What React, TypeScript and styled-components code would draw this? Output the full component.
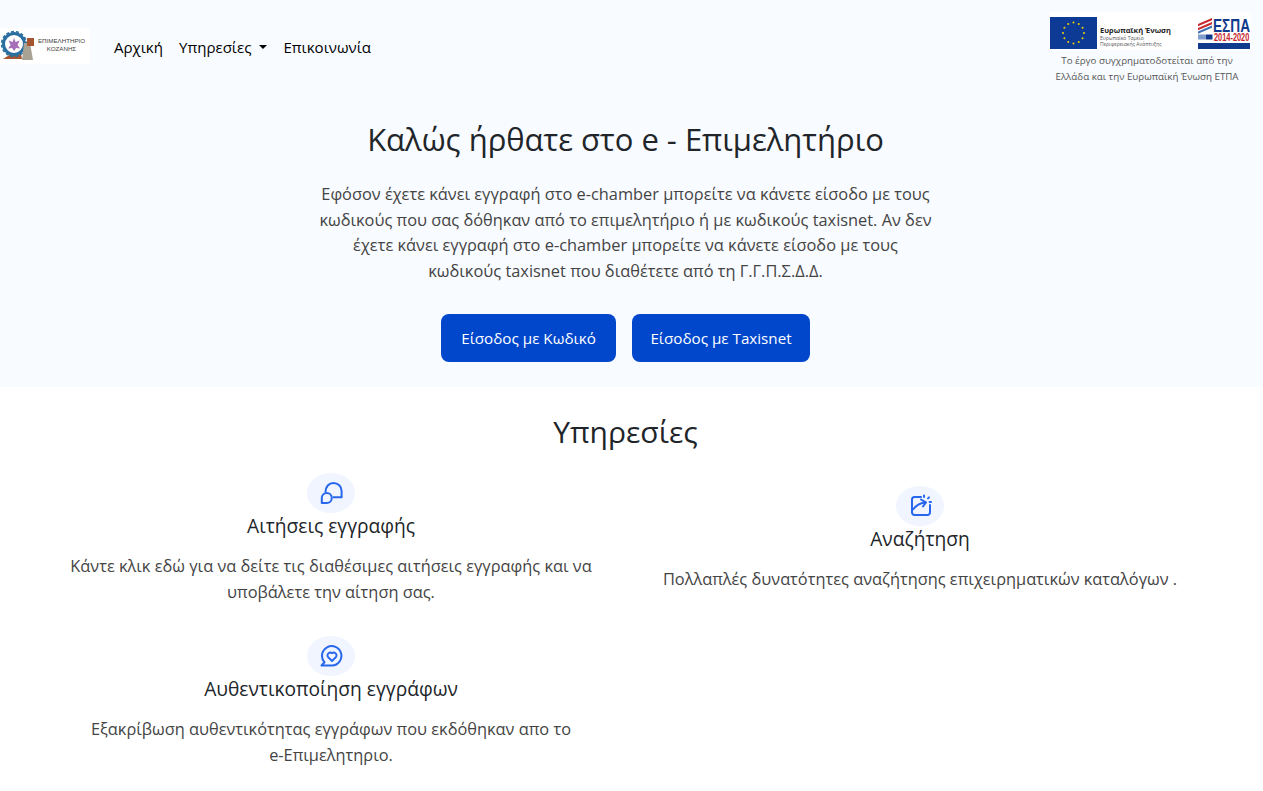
import React from "react";
import styled, { createGlobalStyle } from "styled-components";

const Global = createGlobalStyle`
  html, body { margin: 0; padding: 0; background: #fff; }
  body { font-family: "Open Sans", "Noto Sans", "Liberation Sans", sans-serif; color: #212529; }
`;
const Page = styled.div`
  width: 1263px;
  height: 791px;
  overflow: hidden;
`;
const HeroBand = styled.div`
  width: 1263px;
  height: 387px;
  padding-right: 12px;
  box-sizing: border-box;
  background: #f8fbff;
`;
const Nav = styled.nav`
  height: 93px;
  display: flex;
  align-items: flex-start;
  justify-content: space-between;
`;
const NavLeft = styled.div`
  display: flex;
  align-items: center;
  height: 93px;
`;
const Logo = styled.svg`
  display: block;
  width: 90px;
  height: 36px;
  margin-right: 16px;
  margin-top: -1px;
`;
const NavLink = styled.a`
  font-size: 15.05px;
  color: #000;
  padding: 0 8px;
  display: inline-flex;
  align-items: center;
`;
const Caret = styled.span`
  display: inline-block;
  margin-left: 8px;
  border-top: 4.8px solid #000;
  border-left: 4.8px solid transparent;
  border-right: 4.8px solid transparent;
`;
const Funding = styled.div`
  width: 201px;
  padding-top: 12px;
`;
const FundingLogo = styled.svg`
  display: block;
  width: 201px;
  height: 38px;
`;
const FundingNote = styled.p`
  margin: 3px 7px 0 0;
  font-size: 9.75px;
  line-height: 16px;
  text-align: center;
  white-space: nowrap;
  color: #555;
`;
const Hero = styled.header`
  display: flex;
  flex-direction: column;
  align-items: center;
`;
const Title = styled.h1`
  margin: 27px 0 0;
  font-size: 31px;
  line-height: 38px;
  font-weight: 400;
  color: #212529;
`;
const Lead = styled.p`
  margin: 24px 0 0;
  width: 614px;
  font-size: 16.38px;
  line-height: 25.5px;
  text-align: center;
  color: #444;
`;
const Actions = styled.div`
  margin-top: 30px;
  display: flex;
  gap: 16px;
`;
const Button = styled.a<{ $w: number }>`
  width: ${(p) => p.$w}px;
  height: 48px;
  border-radius: 8px;
  background: #0047cc;
  color: #fff;
  font-size: 15.2px;
  display: flex;
  align-items: center;
  justify-content: center;
`;
const Services = styled.section`
  width: 1178px;
  margin-left: 36.5px;
`;
const SectionTitle = styled.h2`
  margin: 24px 0 20px;
  font-size: 30px;
  line-height: 42px;
  font-weight: 400;
  text-align: center;
  color: #212529;
`;
const Grid = styled.div`
  display: grid;
  grid-template-columns: 1fr 1fr;
  grid-auto-rows: 163px;
  align-items: start;
`;
const Card = styled.article<{ $offset?: number }>`
  display: flex;
  flex-direction: column;
  align-items: center;
  padding: ${(p) => p.$offset ?? 0}px 24px 0;
  text-align: center;
`;
const IconWrap = styled.div`
  width: 48px;
  height: 40px;
  border-radius: 50%;
  background: #f0f5ff;
  display: flex;
  align-items: center;
  justify-content: center;
  color: #2667ee;
`;
const CardTitle = styled.h3`
  margin: 1px 0 0;
  font-size: 19.2px;
  line-height: 24px;
  font-weight: 400;
  color: #212529;
`;
const CardText = styled.p`
  margin: 16px 0 0;
  font-size: 16.38px;
  line-height: 25.5px;
  color: #444;
`;
const NoWrap = styled.span`
  white-space: nowrap;
`;

const BubblesIcon = () => (
  <svg width="24" height="24" viewBox="0 0 24 24" fill="none" stroke="currentColor" strokeWidth="2" strokeLinejoin="round">
    <path d="M6.4 11.500C6.400 5.600 10 2 14.500 2 19 2 22.600 5.500 22.600 10v6.200h-8.800" />
    <path d="M2.800 22V17a5 5 0 1 1 5 5z" />
  </svg>
);
const GrowthIcon = () => (
  <svg width="24" height="24" viewBox="0 0 24 24" fill="none" stroke="currentColor" strokeWidth="2" strokeLinecap="round" strokeLinejoin="round">
    <path d="M13 3H6.500A2.500 2.500 0 0 0 4 5.500v13A2.500 2.500 0 0 0 6.500 21h13a2.500 2.500 0 0 0 2.500-2.500V11" />
    <path d="M5 15.500c3-4 7-6.500 12-7" />
    <path d="M13 5.500l5 2.800-3 4.200" />
    <path d="M16 1.500v1.600M21 3.400l-1 1M23 8h-1.400" />
  </svg>
);
const HeartBubbleIcon = () => (
  <svg width="24" height="24" viewBox="0 0 24 24" fill="none" stroke="currentColor" strokeWidth="2" strokeLinejoin="round">
    <path d="M13 21.500H2.500l3-3.200A9.700 9.700 0 1 1 13 21.500z" />
    <path d="M13 17l-4-4a2.800 2.800 0 0 1 4-3.800 2.800 2.800 0 0 1 4 3.800z" strokeWidth="1.800" />
  </svg>
);

const Stars = () => {
  const pts = Array.from({ length: 12 }, (_, i) => {
    const a = (i * Math.PI) / 6;
    return [23.5 + 10.5 * Math.cos(a), 21 + 10.5 * Math.sin(a)];
  });
  return (
    <>
      {pts.map(([x, y], i) => (
        <circle key={i} cx={x} cy={y} r="1" fill="#f2d200" />
      ))}
    </>
  );
};

export default function App() {
  return (
    <>
      <Global />
      <Page>
        <HeroBand>
          <Nav>
            <NavLeft>
              <Logo viewBox="0 0 90 36">
                <rect width="90" height="36" fill="#fff" />
                <path d="M3 31l8-5h10l1 5z" fill="#a5552f" />
                <circle cx="14" cy="16" r="10.500" fill="none" stroke="#2a6f9f" strokeWidth="3" />
                <circle cx="14" cy="16" r="12.400" fill="none" stroke="#2a6f9f" strokeWidth="1.600" strokeDasharray="3 2" />
                <path d="M14 10l1.600 4 4-1.500-2 4.500 2.500 3.500-4-.5-2 3-2-3-4 .5 2.500-3.500-2-4.500 4 1.500z" fill="#a56fb8" />
                <path d="M24 15h6l3 17h-11z" fill="#a9a294" />
                <path d="M27 10h7v8h-7z" fill="#a5552f" />
                <text x="61.500" y="14.500" fontSize="6.200" fontFamily="Liberation Sans, sans-serif" textAnchor="middle" fill="#444">ΕΠΙΜΕΛΗΤΗΡΙΟ</text>
                <text x="61.500" y="23" fontSize="6.200" fontFamily="Liberation Sans, sans-serif" textAnchor="middle" fill="#444">ΚΟΖΑΝΗΣ</text>
              </Logo>
              <NavLink>Αρχική</NavLink>
              <NavLink>Υπηρεσίες<Caret /></NavLink>
              <NavLink>Επικοινωνία</NavLink>
            </NavLeft>
            <Funding>
              <FundingLogo viewBox="0 0 201 38">
                <rect width="201" height="38" fill="#fff" />
                <rect x="0" y="5" width="47" height="32" fill="#0d3a94" />
                <Stars />
                <text x="50" y="21" fontSize="7.500" fontWeight="700" fontFamily="Open Sans, sans-serif" fill="#222">Ευρωπαϊκή Ένωση</text>
                <text x="50" y="28" fontSize="5" fontFamily="Open Sans, sans-serif" fill="#555">Ευρωπαϊκό Ταμείο</text>
                <text x="50" y="34" fontSize="5" fontFamily="Open Sans, sans-serif" fill="#555">Περιφερειακής Ανάπτυξης</text>
                <path d="M148 12l14-6v2.200l-14 6zM148 16l14-6v2.200l-14 6z" fill="#c8272d" />
                <path d="M148 19.500l14-6v2.200l-14 6z" fill="#3d6fb4" />
                <text transform="translate(163 19.500) scale(.76 1)" fontSize="18" fontWeight="700" fontFamily="Liberation Sans, sans-serif" fill="#123a8c">ΕΣΠΑ</text>
                <text transform="translate(164 28.500) scale(.74 1)" fontSize="10" fontWeight="700" fontFamily="Liberation Sans, sans-serif" fill="#c8272d">2014-2020</text>
                <rect x="148" y="22.500" width="7" height="5" fill="#7f9ccc" />
                <rect x="155.500" y="22.500" width="7" height="5" fill="#123a8c" />
                <rect x="148" y="31" width="52" height="6" fill="#123a8c" />
              </FundingLogo>
              <FundingNote>Το έργο συγχρηματοδοτείται από την<br />Ελλάδα και την Ευρωπαϊκή Ένωση ΕΤΠΑ</FundingNote>
            </Funding>
          </Nav>
          <Hero>
            <Title>Καλώς ήρθατε στο e - Επιμελητήριο</Title>
            <Lead>Εφόσον έχετε κάνει εγγραφή στο e-chamber μπορείτε να κάνετε είσοδο με τους κωδικούς που σας δόθηκαν από το επιμελητήριο ή με κωδικούς taxisnet. Αν δεν έχετε κάνει εγγραφή στο e-chamber μπορείτε να κάνετε είσοδο με τους κωδικούς taxisnet που διαθέτετε από τη Γ.Γ.Π.Σ.Δ.Δ.</Lead>
            <Actions>
              <Button $w={175}>Είσοδος με Κωδικό</Button>
              <Button $w={178}>Είσοδος με Taxisnet</Button>
            </Actions>
          </Hero>
        </HeroBand>
        <Services>
          <SectionTitle>Υπηρεσίες</SectionTitle>
          <Grid>
            <Card>
              <IconWrap><BubblesIcon /></IconWrap>
              <CardTitle>Αιτήσεις εγγραφής</CardTitle>
              <CardText>Κάντε κλικ εδώ για να δείτε τις διαθέσιμες αιτήσεις εγγραφής και να υποβάλετε την αίτηση σας.</CardText>
            </Card>
            <Card $offset={13}>
              <IconWrap><GrowthIcon /></IconWrap>
              <CardTitle>Αναζήτηση</CardTitle>
              <CardText>Πολλαπλές δυνατότητες αναζήτησης επιχειρηματικών καταλόγων .</CardText>
            </Card>
            <Card>
              <IconWrap><HeartBubbleIcon /></IconWrap>
              <CardTitle>Αυθεντικοποίηση εγγράφων</CardTitle>
              <CardText>Εξακρίβωση αυθεντικότητας εγγράφων που εκδόθηκαν απο το <NoWrap>e-Επιμελητηριο.</NoWrap></CardText>
            </Card>
          </Grid>
        </Services>
      </Page>
    </>
  );
}
